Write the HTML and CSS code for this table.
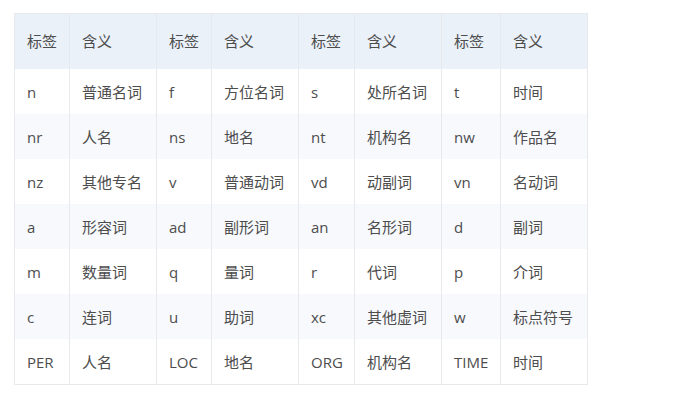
FILE: index.html
```html
<!DOCTYPE html>
<html lang="zh">
<head>
<meta charset="utf-8">
<link rel="stylesheet" href="styles.css">
</head>
<body>
<table class="tags">
<colgroup>
<col class="c-tag1"><col class="c-mean">
<col class="c-tag1"><col class="c-mean">
<col class="c-tag3"><col class="c-mean">
<col class="c-tag4"><col class="c-mean">
</colgroup>
<thead>
<tr><th>标签</th><th>含义</th><th>标签</th><th>含义</th><th>标签</th><th>含义</th><th>标签</th><th>含义</th></tr>
</thead>
<tbody>
<tr><td>n</td><td>普通名词</td><td>f</td><td>方位名词</td><td>s</td><td>处所名词</td><td>t</td><td>时间</td></tr>
<tr><td>nr</td><td>人名</td><td>ns</td><td>地名</td><td>nt</td><td>机构名</td><td>nw</td><td>作品名</td></tr>
<tr><td>nz</td><td>其他专名</td><td>v</td><td>普通动词</td><td>vd</td><td>动副词</td><td>vn</td><td>名动词</td></tr>
<tr><td>a</td><td>形容词</td><td>ad</td><td>副形词</td><td>an</td><td>名形词</td><td>d</td><td>副词</td></tr>
<tr><td>m</td><td>数量词</td><td>q</td><td>量词</td><td>r</td><td>代词</td><td>p</td><td>介词</td></tr>
<tr><td>c</td><td>连词</td><td>u</td><td>助词</td><td>xc</td><td>其他虚词</td><td>w</td><td>标点符号</td></tr>
<tr><td>PER</td><td>人名</td><td>LOC</td><td>地名</td><td>ORG</td><td>机构名</td><td>TIME</td><td>时间</td></tr>
</tbody>
</table>
</body>
</html>
```
FILE: styles.css
```css
html, body {
  margin: 0;
  background: #ffffff;
}
body {
  padding: 13px 14px;
  font-family: "Open Sans", "Noto Sans CJK SC", sans-serif;
  font-size: 15px;
  color: #4d4d4d;
}
.tags {
  border-collapse: collapse;
  table-layout: fixed;
  width: 573px;
  border: 1px solid #e7e9ec;
}
.c-tag1 { width: 55px; }
.c-tag3 { width: 56px; }
.c-tag4 { width: 59px; }
.c-mean { width: 87px; }
.tags th, .tags td {
  text-align: left;
  font-weight: normal;
  padding: 0 0 0 12px;
  border-left: 1px solid #e7e9ec;
  border-right: 1px solid #e7e9ec;
  white-space: nowrap;
  line-height: 20px;
}
.tags th {
  height: 53px;
  padding-bottom: 2px;
  background: #eaf1f9;
}
.tags td {
  height: 45px;
}
.tags tbody tr:nth-child(even) td {
  background: #f7f9fd;
}
```
